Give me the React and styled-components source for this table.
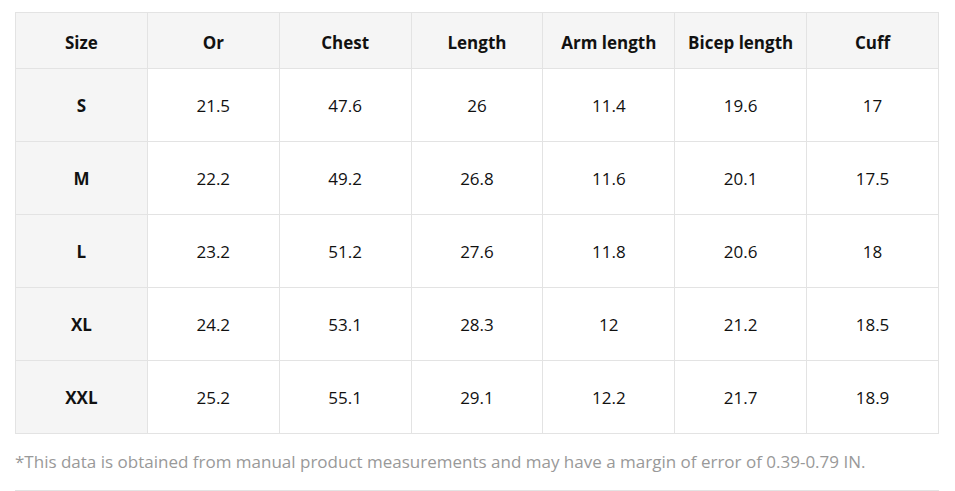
import styled, { createGlobalStyle } from "styled-components";

const GlobalStyle = createGlobalStyle`
  body {
    margin: 0;
    background: #fff;
    font-family: "Open Sans", "Noto Sans", sans-serif;
    color: #111;
  }
`;

const Wrapper = styled.div`
  padding: 12px 16px 0 15px;
  width: 924px;
`;

const Table = styled.table`
  width: 924px;
  border-collapse: collapse;
  table-layout: fixed;
`;

const HeadCell = styled.th`
  height: 52px;
  background: #f5f5f5;
  border: 1px solid #e3e3e3;
  font-size: 17px;
  font-weight: 700;
  text-align: center;
  padding: 3px 0 0;
`;

const Cell = styled.td`
  height: 72px;
  border: 1px solid #e3e3e3;
  font-size: 17px;
  font-weight: ${(p) => (p.$label ? 700 : 400)};
  background: ${(p) => (p.$label ? "#f5f5f5" : "#fff")};
  text-align: center;
  padding: 0;
`;

const Note = styled.p`
  margin: 0;
  padding: 16px 0 17px;
  font-size: 17px;
  color: #999;
  border-bottom: 1px solid #e3e3e3;
`;

const columns = ["Size", "Or", "Chest", "Length", "Arm length", "Bicep length", "Cuff"];

const rows = [
  ["S", "21.5", "47.6", "26", "11.4", "19.6", "17"],
  ["M", "22.2", "49.2", "26.8", "11.6", "20.1", "17.5"],
  ["L", "23.2", "51.2", "27.6", "11.8", "20.6", "18"],
  ["XL", "24.2", "53.1", "28.3", "12", "21.2", "18.5"],
  ["XXL", "25.2", "55.1", "29.1", "12.2", "21.7", "18.9"],
];

const App = () => {
  return (
    <Wrapper>
      <GlobalStyle />
      <Table>
        <thead>
          <tr>
            {columns.map((c) => (
              <HeadCell key={c}>{c}</HeadCell>
            ))}
          </tr>
        </thead>
        <tbody>
          {rows.map((r) => (
            <tr key={r[0]}>
              {r.map((v, i) => (
                <Cell key={i} $label={i === 0}>
                  {v}
                </Cell>
              ))}
            </tr>
          ))}
        </tbody>
      </Table>
      <Note>
        *This data is obtained from manual product measurements and may have a margin of error of 0.39-0.79 IN.
      </Note>
    </Wrapper>
  );
};

export default App;
